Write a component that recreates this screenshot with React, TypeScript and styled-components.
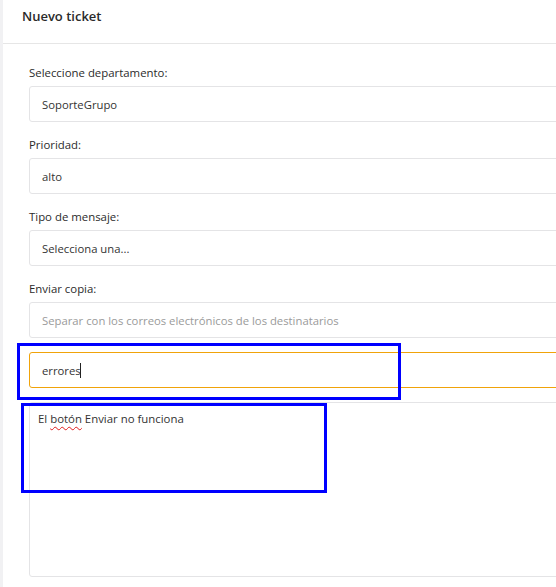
import React from "react";
import styled, { createGlobalStyle } from "styled-components";

const Global = createGlobalStyle`
  html, body { margin: 0; padding: 0; background: #fff; overflow: hidden; }
  body { font-family: "Open Sans", "Noto Sans", sans-serif; }
  #root { width: 556px; height: 587px; }
`;

const Page = styled.div`
  display: flex;
  width: 556px;
  height: 587px;
  background: #f1f1f3;
  overflow: hidden;
  position: relative;
`;

const Card = styled.div`
  margin-left: 3px;
  flex: 0 0 600px;
  background: #fff;
  display: flex;
  flex-direction: column;
`;

const Header = styled.div`
  padding: 7px 19px 18px;
  font-size: 13px;
  line-height: 18px;
  font-weight: 600;
  color: #2a2a2a;
  border-bottom: 1px solid #e6e6e6;
`;

const Form = styled.div`
  padding: 20px 0 0 26px;
  display: flex;
  flex-direction: column;
  gap: 14px;
`;

const Field = styled.div`
  display: flex;
  flex-direction: column;
  gap: 4px;
`;

const Label = styled.div`
  font-size: 11.4px;
  line-height: 18px;
  color: #2b2b2b;
`;

const Input = styled.div<{ $focus?: boolean; $placeholder?: boolean }>`
  box-sizing: border-box;
  height: 36px;
  border: 1px solid ${(p) => (p.$focus ? "#f0a30a" : "#e4e4e6")};
  border-radius: 3px;
  padding: 0 12px;
  display: flex;
  align-items: center;
  font-size: 11.3px;
  color: ${(p) => (p.$placeholder ? "#9a9a9a" : "#333")};
`;

const Caret = styled.span`
  display: inline-block;
  width: 1px;
  height: 15px;
  background: #222;
  margin-left: -1px;
`;

const TextArea = styled.div`
  box-sizing: border-box;
  height: 175px;
  border: 1px solid #e4e4e6;
  border-radius: 3px;
  padding: 7px 8px;
  font-size: 11.4px;
  line-height: 18px;
  color: #333;
`;

const Misspelled = styled.span`
  text-decoration: underline wavy #e01b1b;
  text-decoration-thickness: 1px;
  text-underline-offset: 3px;
`;

const Highlight = styled.div<{ $x: number; $y: number; $w: number; $h: number }>`
  position: absolute;
  left: ${(p) => p.$x}px;
  top: ${(p) => p.$y}px;
  width: ${(p) => p.$w}px;
  height: ${(p) => p.$h}px;
  box-sizing: border-box;
  border: 3px solid #0000ff;
  pointer-events: none;
`;

export default function App() {
  return (
    <>
      <Global />
      <Page>
        <Card>
          <Header>Nuevo ticket</Header>
          <Form>
            <Field>
              <Label>Seleccione departamento:</Label>
              <Input>SoporteGrupo</Input>
            </Field>
            <Field>
              <Label>Prioridad:</Label>
              <Input>alto</Input>
            </Field>
            <Field>
              <Label>Tipo de mensaje:</Label>
              <Input>Selecciona una...</Input>
            </Field>
            <Field>
              <Label>Enviar copia:</Label>
              <Input $placeholder>Separar con los correos electrónicos de los destinatarios</Input>
            </Field>
            <Input $focus>
              errores<Caret />
            </Input>
            <TextArea>
              El <Misspelled>botón</Misspelled> Enviar no funciona
            </TextArea>
          </Form>
        </Card>
        <Highlight $x={17} $y={343} $w={384} $h={57} />
        <Highlight $x={21} $y={403} $w={306} $h={90} />
      </Page>
    </>
  );
}
